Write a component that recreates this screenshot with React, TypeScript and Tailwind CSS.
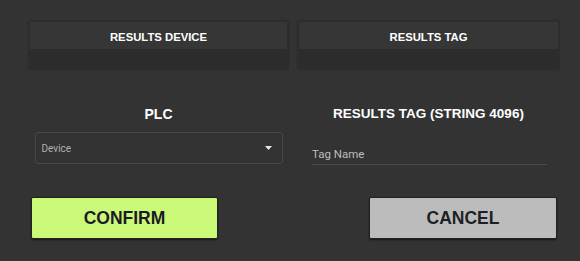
const Panel = ({ title }: { title: string }) => (
  <div className="flex flex-col border border-[#2e2e2e] shadow-[0_0_2px_rgba(0,0,0,0.4)]">
    <div className="h-[27px] bg-[#363636] flex items-center justify-center pt-[3px] text-[11.3px] font-bold text-white">
      {title}
    </div>
    <div className="h-[19px] bg-[#2c2c2c]" />
  </div>
);

export default function App() {
  return (
    <div
      className="w-[580px] h-[261px] bg-[#333333] overflow-hidden pl-[29px] pr-[21px] pt-[21px]"
      style={{ fontFamily: '"Liberation Sans", Arial, sans-serif' }}
    >
      <div className="grid grid-cols-[259px_261px] gap-[10px]">
        <Panel title="RESULTS DEVICE" />
        <Panel title="RESULTS TAG" />
      </div>

      <div className="grid grid-cols-[259px_261px] gap-[10px] mt-[37px]">
        <div className="flex flex-col items-center">
          <div className="text-[14px] leading-[16px] font-bold text-white">PLC</div>
          <div className="mt-[10px] w-[248px] h-[32px] rounded-[3px] border border-[#474747] flex items-center justify-between pl-[6px] pr-[10px]">
            <span
              className="text-[10px] text-[#b0b0b0]"
              style={{ fontFamily: 'Roboto, "Noto Sans", sans-serif' }}
            >
              Device
            </span>
            <svg width="7" height="4" viewBox="0 0 7 4">
              <path d="M0 0 L7 0 L3.5 4 Z" fill="#e6e6e6" />
            </svg>
          </div>
        </div>
        <div className="flex flex-col">
          <div className="text-[13.5px] leading-[16px] font-bold text-white text-center">
            RESULTS TAG (STRING 4096)
          </div>
          <div className="mt-[24px] ml-[14px] mr-[12px] border-b border-[#4a4a4a] pb-[3px] leading-[14px]">
            <span
              className="text-[11.5px] text-[#bdbdbd]"
              style={{ fontFamily: 'Roboto, "Noto Sans", sans-serif' }}
            >
              Tag Name
            </span>
          </div>
        </div>
      </div>

      <div className="flex justify-between mt-[32px] pl-[2px] pr-[2px]">
        <button className="w-[187px] h-[42px] rounded-[2px] bg-[#c9f977] border border-[#222] shadow-[0_1px_2px_rgba(0,0,0,0.6)] text-[17.5px] font-bold text-[#1c1a26]">
          CONFIRM
        </button>
        <button className="w-[188px] h-[42px] rounded-[2px] bg-[#bcbcbc] border border-[#222] shadow-[0_1px_2px_rgba(0,0,0,0.6)] text-[17.5px] font-bold text-[#1f1f25]">
          CANCEL
        </button>
      </div>
    </div>
  );
}
